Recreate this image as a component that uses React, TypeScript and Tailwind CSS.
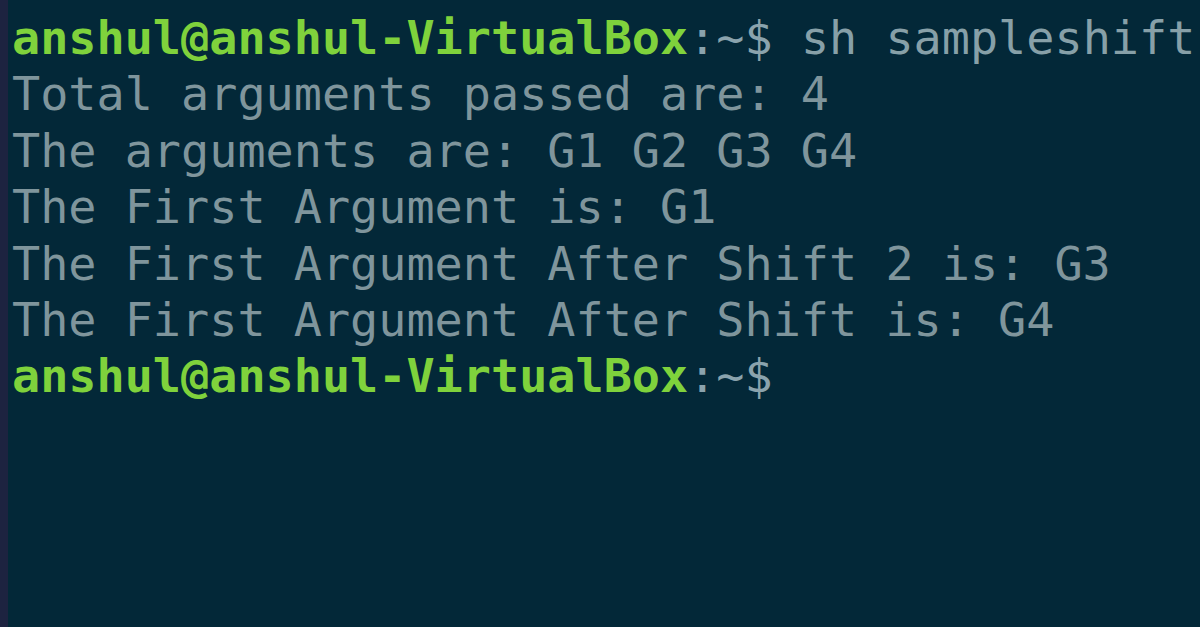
import React from 'react'

const user = 'anshul@anshul-VirtualBox'

const output = [
    'Total arguments passed are: 4',
    'The arguments are: G1 G2 G3 G4',
    'The First Argument is: G1',
    'The First Argument After Shift 2 is: G3',
    'The First Argument After Shift is: G4',
]

const Prompt: React.FC<{ cmd?: string }> = ({ cmd }) => (
    <div className="whitespace-pre">
        <span className="font-bold text-[#7fd23c]">{user}</span>
        <span className="text-[#8aa3ad]">:~$</span>
        {cmd && <span className="text-[#87a0a8]"> {cmd}</span>}
    </div>
)

export default function App() {
    return (
        <div
            className="flex h-[627px] w-[1200px] overflow-hidden bg-[#032838]"
            style={{ fontFamily: '"DejaVu Sans Mono", "Liberation Mono", monospace' }}
        >
            <div className="w-[8px] shrink-0 bg-[#1d2340]" />
            <div className="flex-1 overflow-hidden pl-[4px] pt-[10px] text-[46.8px] leading-[56.4px] text-[#7f959c]">
                <Prompt cmd="sh sampleshift" />
                {output.map((line) => (
                    <div key={line} className="whitespace-pre">{line}</div>
                ))}
                <Prompt />
            </div>
        </div>
    )
}
